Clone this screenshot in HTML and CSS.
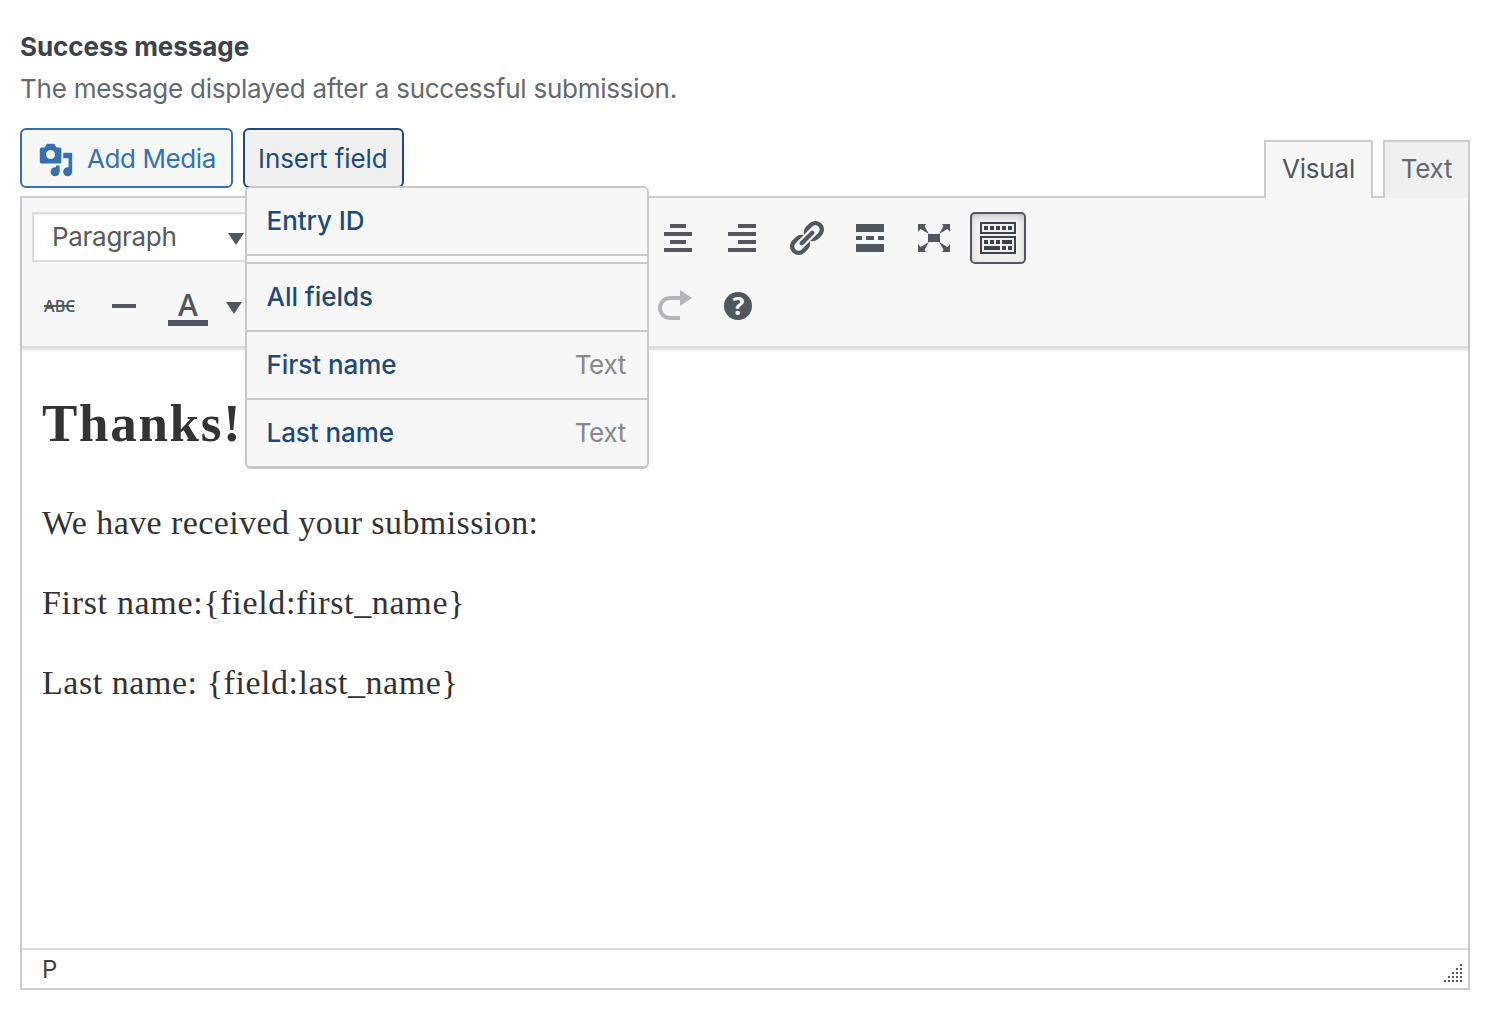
FILE: index.html
```html
<!DOCTYPE html>
<html lang="en">
<head>
<meta charset="utf-8">
<title>Success message</title>
<link rel="stylesheet" href="styles.css">
</head>
<body>
<main class="setting">
  <h2 class="setting-title">Success message</h2>
  <p class="setting-description">The message displayed after a successful submission.</p>

  <div class="editor-tools">
    <button class="button" type="button">
      <svg class="media-icon" viewBox="0 0 20 20"><path d="M13 11V4c0-.55-.45-1-1-1h-1.670L9 1H5L3.670 3H2c-.55 0-1 .45-1 1v7c0 .55.45 1 1 1h10c.55 0 1-.45 1-1zM7 4.500c1.380 0 2.500 1.120 2.500 2.500S8.380 9.500 7 9.500 4.500 8.380 4.500 7 5.620 4.500 7 4.500zM14 6h5v10.500c0 1.380-1.120 2.500-2.500 2.500S14 17.880 14 16.500s1.120-2.500 2.500-2.500c.17 0 .34.02.5.05V9h-3V6zm-4 8.050V13h2v3.500c0 1.380-1.120 2.500-2.500 2.500S7 17.880 7 16.500 8.120 14 9.500 14c.17 0 .34.02.5.05z"/></svg>
      <span class="media-label">Add Media</span>
    </button>
    <div class="insert">
      <button class="button button-open" type="button"><span class="insert-label">Insert field</span></button>
      <ul class="menu">
        <li class="menu-item"><span>Entry ID</span></li>
        <li class="menu-item menu-item-group"><span>All fields</span></li>
        <li class="menu-item"><span>First name</span><span class="menu-type">Text</span></li>
        <li class="menu-item"><span>Last name</span><span class="menu-type">Text</span></li>
      </ul>
    </div>
    <div class="tabs">
      <button class="tab tab-active" type="button">Visual</button>
      <button class="tab tab-text" type="button">Text</button>
    </div>
  </div>

  <section class="editor">
    <div class="toolbar">
      <div class="toolbar-row">
        <div class="format-select"><span class="format-label">Paragraph</span><svg class="caret" viewBox="0 0 16 12"><path d="M0 0h16L8 12z"/></svg></div>
        <div class="tool-group">
          <span class="tool"><svg viewBox="0 0 40 40"><path d="M12 6h16v4H12zM6 14h28v4H6zM12 22h16v4H12zM6 30h28v4H6z"/></svg></span>
          <span class="tool"><svg viewBox="0 0 40 40"><path d="M16 6h18v4H16zM6 14h28v4H6zM16 22h18v4H16zM6 30h28v4H6z"/></svg></span>
          <span class="tool"><svg viewBox="0 0 20 20"><path d="M17.740 2.760c1.680 1.690 1.680 4.410 0 6.100l-1.530 1.520c-1.120 1.120-2.700 1.470-4.140 1.090l2.620-2.610.76-.77.76-.76c.84-.84.84-2.200 0-3.040-.84-.85-2.200-.85-3.040 0l-.77.76-3.380 3.380c-.37-1.440-.02-3.020 1.100-4.140l1.520-1.530c1.690-1.680 4.420-1.680 6.100 0zM8.590 13.430l5.340-5.340c.42-.42.42-1.100 0-1.520-.44-.43-1.130-.39-1.530 0l-5.330 5.340c-.42.42-.42 1.100 0 1.520.44.43 1.130.39 1.520 0zm-.76 2.290l4.140-4.150c.38 1.440.03 3.020-1.090 4.140l-1.520 1.530c-1.690 1.680-4.410 1.680-6.100 0-1.680-1.680-1.680-4.420 0-6.100l1.530-1.520c1.120-1.120 2.700-1.470 4.140-1.100l-4.140 4.150c-.85.84-.85 2.200 0 3.050.84.84 2.200.84 3.040 0z"/></svg></span>
          <span class="tool"><svg viewBox="0 0 40 40"><path d="M6 6h28v8H6zM6 18h6v4H6zM16 18h8v4h-8zM28 18h6v4h-6zM6 26h28v8H6z"/></svg></span>
          <span class="tool"><svg viewBox="0 0 40 40"><path d="M14 16h12v8H14zM4 6h8l-1.500 2.200 4.500 7.800-8.500-5L4 14zM36 6h-8l1.500 2.200-4.500 7.800 8.500-5L36 14zM4 34h8l-1.500-2.200 4.500-7.800-8.500 5L4 26zM36 34h-8l1.500-2.200-4.500-7.800 8.500 5L36 26z"/></svg></span>
          <span class="tool tool-active"><svg viewBox="0 0 40 40"><path fill-rule="evenodd" d="M2 4h36v12H2zM4 6v8h32V6zM2 18h36v18H2zM4 20v14h32V20z"/><path d="M6 8h4v4H6zM12 8h4v4h-4zM18 8h4v4h-4zM24 8h4v4h-4zM30 8h4v4h-4zM6 22h4v4H6zM12 22h4v4h-4zM18 22h4v4h-4zM24 22h10v4H24zM6 28h16v4H6zM24 28h4v4h-4zM30 28h4v4h-4z"/></svg></span>
        </div>
      </div>
      <div class="toolbar-row">
        <div class="tool-group">
          <span class="tool"><svg viewBox="0 0 40 40"><text class="strike-text" x="4" y="26" textLength="31.500">ABC</text><path d="M4 19h30v2H4z"/></svg></span>
          <span class="tool"><svg viewBox="0 0 40 40"><path d="M8 18h24v4H8z"/></svg></span>
          <span class="tool"><svg viewBox="0 0 40 40"><text class="color-text" x="20" y="29.500">A</text><path d="M0 34h40v6H0z"/></svg></span>
        </div>
        <svg class="caret caret-color" viewBox="0 0 16 12"><path d="M0 0h16L8 12z"/></svg>
        <div class="tool-group history-group">
          <span class="tool tool-disabled"><svg viewBox="0 0 20 20"><path d="M8 5h5V2l6 4-6 4V7H8c-2.200 0-4 1.800-4 4s1.800 4 4 4h5v2H8c-3.300 0-6-2.700-6-6s2.700-6 6-6z"/></svg></span>
          <span class="tool"><svg viewBox="0 0 40 40"><circle cx="20" cy="20" r="14"/><text class="help-text" x="20.500" y="29">?</text></svg></span>
        </div>
      </div>
    </div>
    <article class="content">
      <h2 class="content-title">Thanks!</h2>
      <p class="line-intro">We have received your submission:</p>
      <p class="line-first">First name:{field:first_name}</p>
      <p class="line-last">Last name: {field:last_name}</p>
    </article>
    <footer class="statusbar">
      <span>P</span>
      <svg class="grip" viewBox="0 0 18 18"><path d="M16 0h2v2h-2zM12 4h2v2h-2zM16 4h2v2h-2zM8 8h2v2H8zM12 8h2v2h-2zM16 8h2v2h-2zM4 12h2v2H4zM8 12h2v2H8zM12 12h2v2h-2zM16 12h2v2h-2zM0 16h2v2H0zM4 16h2v2H4zM8 16h2v2H8zM12 16h2v2h-2zM16 16h2v2h-2z"/></svg>
    </footer>
  </section>
</main>
</body>
</html>
```
FILE: styles.css
```css
* { box-sizing: border-box; }

body {
  margin: 0;
  background: #fff;
  color: #3c434a;
  font: 26px/36px Inter, "Liberation Sans", sans-serif;
}

button { font: inherit; margin: 0; }

.setting { padding: 29px 22px 30px 20px; }

.setting-title {
  margin: 0;
  font-size: 26px;
  font-weight: 700;
  line-height: 36px;
  letter-spacing: -.05px;
}

.setting-description {
  margin: 6px 0 0;
  color: #646970;
  letter-spacing: -.25px;
}

.editor-tools {
  display: flex;
  align-items: flex-start;
  gap: 10px;
  height: 70px;
  margin-top: 21px;
}

.button {
  display: flex;
  align-items: center;
  width: 213px;
  height: 60px;
  padding: 0 0 0 16px;
  border: 2px solid #3571b0;
  border-radius: 6px;
  background: #f6f8f8;
  color: #3571b0;
  white-space: nowrap;
}

.button-open {
  width: 161px;
  padding-left: 13px;
  border-color: #1d4b79;
  background: #f0f0f1;
  color: #1d4b79;
}

.media-icon {
  width: 36px;
  height: 36px;
  margin: 3px 13px 0 0;
  fill: currentColor;
}

.media-label {
  padding-top: 2px;
  letter-spacing: -.4px;
}

.insert-label {
  padding-top: 2px;
  letter-spacing: -.08px;
}

.insert { position: relative; }

.menu {
  position: absolute;
  z-index: 2;
  top: 58px;
  left: 2px;
  width: 404px;
  margin: 0;
  padding: 0;
  border: 2px solid #c8c8c8;
  border-bottom-width: 3px;
  border-radius: 6px;
  background: #fff;
  list-style: none;
  overflow: hidden;
}

.menu-item {
  display: flex;
  align-items: center;
  justify-content: space-between;
  height: 68px;
  padding: 0 21px 0 19.5px;
  border-bottom: 2px solid #c8c8c8;
  background: #f7f7f7;
  color: #1d4b79;
  font-weight: 500;
  letter-spacing: -.05px;
}

.menu-item:last-child { height: 66px; border-bottom: 0; }

.menu-item-group {
  height: 70px;
  margin-top: 6px;
  border-top: 2px solid #c8c8c8;
}

.menu-type {
  color: #888;
  font-weight: 400;
  letter-spacing: -.3px;
}

.tabs {
  display: flex;
  gap: 10px;
  margin: 12px 0 0 auto;
}

.tab {
  position: relative;
  z-index: 1;
  width: 109px;
  height: 58px;
  padding: 0 0 2px;
  border: 2px solid #c9cdd2;
  border-bottom: 0;
  background: #f0f0f0;
  color: #646970;
  letter-spacing: -.2px;
}

.tab-active { background: #f6f8f8; color: #50575e; }
.tab-text { width: 87px; }

.editor {
  display: flex;
  flex-direction: column;
  height: 794px;
  margin-top: -2px;
  border: 2px solid #c9cdd2;
}

.toolbar {
  display: flex;
  flex-direction: column;
  gap: 16px;
  height: 150px;
  padding: 14px 10px;
  border-bottom: 2px solid #dcdcde;
  background: #f6f8f8;
  box-shadow: 0 2px 3px rgba(0, 0, 0, .14);
}

.toolbar-row {
  display: flex;
  flex: none;
  align-items: center;
  height: 52px;
}

.format-select {
  display: flex;
  align-items: center;
  justify-content: space-between;
  width: 222px;
  height: 50px;
  margin: 0 396px 2px 0;
  padding: 0 8px 0 18px;
  border: 2px solid #dcdcde;
  background: #fff;
  color: #595959;
  box-shadow: inset 0 2px 2px -1px rgba(0, 0, 0, .07);
}

.format-label { letter-spacing: -.3px; }

.caret {
  width: 16px;
  height: 12px;
  margin-top: 3px;
  fill: #50575e;
}

.caret-color { margin-left: 10px; }

.tool-group { display: flex; gap: 8px; }

.history-group { margin-left: 404px; }

.tool {
  display: flex;
  align-items: center;
  justify-content: center;
  width: 56px;
  height: 52px;
  color: #50575e;
}

.tool svg {
  flex: none;
  width: 40px;
  height: 40px;
  fill: currentColor;
  overflow: visible;
}

.tool-active {
  border: 2px solid #50575e;
  border-radius: 5px;
  background: #f0f0f0;
  color: #3c434a;
  box-shadow: inset 0 3px 8px -3px rgba(0, 0, 0, .3);
}

.tool-disabled { color: #b3b6b9; }

.strike-text { font: 600 16px "Open Sans", sans-serif; }

.color-text {
  font: 600 30px "Open Sans", sans-serif;
  text-anchor: middle;
}

.help-text {
  fill: #f6f8f8;
  font: 700 25px "Open Sans", sans-serif;
  text-anchor: middle;
}

.content {
  flex: 1;
  padding: 47px 20px 0;
  color: #333;
  font: 34px/48px "Liberation Serif", serif;
}

.content p { margin: 0 0 32px; }

.content .content-title {
  margin: 0 0 48px;
  font-size: 53px;
  font-weight: 700;
  line-height: 56px;
  letter-spacing: 1.7px;
}

.line-intro { letter-spacing: .42px; }
.line-first { letter-spacing: .67px; }
.line-last { letter-spacing: .55px; }

.statusbar {
  display: flex;
  align-items: center;
  justify-content: space-between;
  height: 40px;
  padding: 0 6px 0 20px;
  border-top: 2px solid #dcdcde;
  font-size: 24px;
}

.statusbar span { padding-top: 2px; }

.grip {
  width: 18px;
  height: 18px;
  margin-top: 8px;
  fill: #50575e;
}
```
